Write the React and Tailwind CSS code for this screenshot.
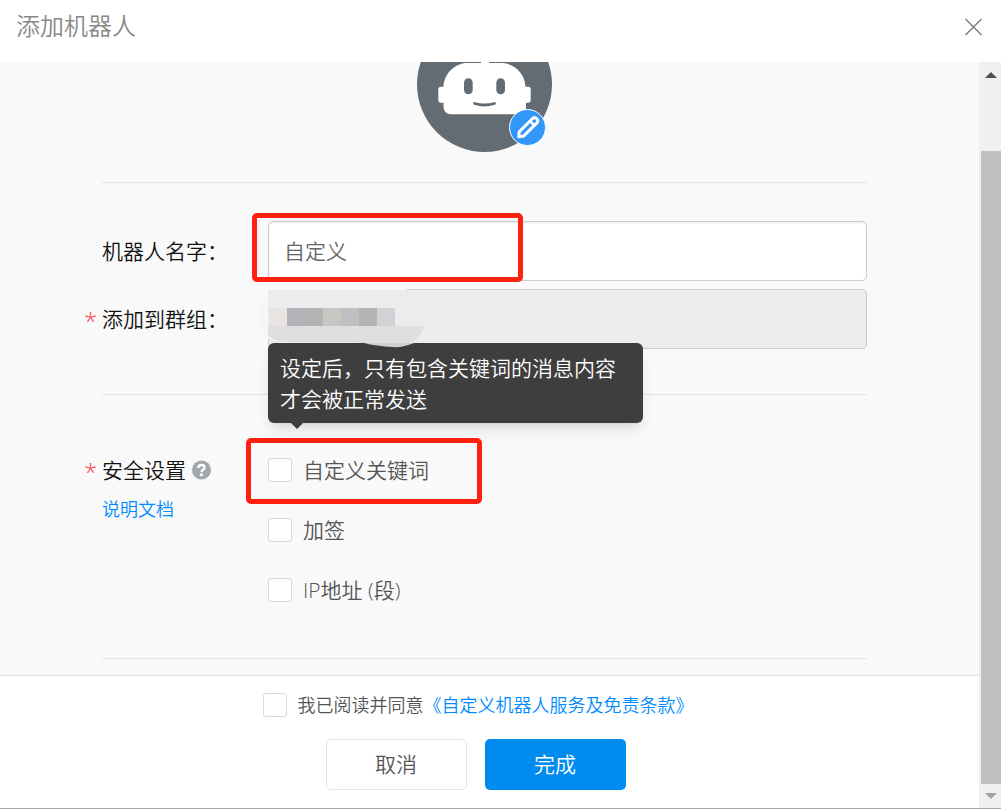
import { useState } from 'react'

const SAFETY_OPTIONS = [
    { id: 'keyword', label: '自定义关键词', tip: '设定后，只有包含关键词的消息内容才会被正常发送' },
    { id: 'sign', label: '加签' },
    { id: 'ip', label: 'IP地址 (段)' },
]

function RobotAvatar() {
    return (
        <svg width="135" height="135" viewBox="0 0 135 135" role="img" aria-label="机器人头像">
            <circle cx="67.5" cy="67.5" r="67.5" fill="#646c73" />
            <rect x="64" y="30" width="8" height="20" fill="#fff" />
            <path
                d="M49 46H86C98 47 108 57 108.500 69.700H111Q113.700 69.700 113.700 72.500V83Q113.700 85.700 111 85.700H109V91Q108.500 97.300 102 97.300H34Q27 97 26.500 90V85.700H24Q21.300 85.700 21.300 83V72.500Q21.300 69.700 24 69.700H26.500C27 57 37 47 49 46Z"
                fill="#fff"
            />
            <rect x="47" y="61.300" width="8.700" height="16" rx="4.350" fill="#646c73" />
            <rect x="79.300" y="61.300" width="8.700" height="16" rx="4.350" fill="#646c73" />
            <path d="M57.500 86.500Q67.500 89.500 77.500 86.500" fill="none" stroke="#646c73" strokeWidth="2.800" strokeLinecap="round" />
            <circle cx="110.500" cy="110.500" r="18" fill="#3296fa" stroke="#fff" strokeWidth="1" />
            <path
                d="M101.800 119.800L102.200 114.800L115.800 101.300Q117.800 99.700 119.800 101.700Q121.600 103.700 120.200 105.600L106.800 118.900Z"
                fill="none"
                stroke="#fff"
                strokeWidth="3"
                strokeLinejoin="round"
            />
            <path d="M112.800 103.800L117.600 108.600" stroke="#fff" strokeWidth="2.600" />
        </svg>
    )
}

function Checkbox({ id, checked, onChange }) {
    return (
        <input
            id={id}
            type="checkbox"
            checked={checked}
            onChange={onChange}
            className="size-6 shrink-0 appearance-none rounded-[3px] border border-[#d9d9d9] bg-white checked:border-[#008cee] checked:bg-[#008cee]"
        />
    )
}

function FieldRow({ label, htmlFor, required, children }) {
    return (
        <div className="flex items-center">
            <span className="w-[18px] pt-1 text-2xl leading-none text-[#ff3b4e]">{required && '*'}</span>
            <label htmlFor={htmlFor} className="w-[166px] shrink-0 text-[21px] leading-[30px] text-[#111]">{label}</label>
            <div className="relative flex-1">{children}</div>
        </div>
    )
}

function Highlight({ className }) {
    return <div className={`pointer-events-none absolute rounded-[5px] border-5 border-[#ff2010] ${className}`} />
}

// pixelated group name, smeared past the left edge of its field
function Mosaic() {
    const blocks = ['#e8e4e1', '#b3b4b9', '#b3b3b3', '#c8c6c2', '#bec0c3', '#b5b4b3', '#d0d2d5']
    return (
        <svg className="pointer-events-none absolute -top-2 -left-3 z-20" width="180" height="70" viewBox="0 0 180 70">
            <path d="M13 14Q3 20 2 34Q2 50 13 58Z" fill="#f6f6f6" />
            <path d="M12 8H150Q162 14 168 27V45H12Z" fill="#ececec" />
            <path d="M12 5H140L152 9H12Z" fill="#f7f7f7" />
            <path d="M12 45H169Q164 57 154 62H108L85 61H40Q22 62 12 55Z" fill="#dfdfdf" />
            <path d="M108 62H158Q146 67 137 66Q120 65 108 62Z" fill="#d0d0d0" />
            {blocks.map((color, i) => (
                <rect key={i} x={13 + i * 18} y="27" width="18" height="18" fill={color} />
            ))}
        </svg>
    )
}

function Tooltip({ children }) {
    return (
        <div role="tooltip" className="absolute bottom-full left-0 z-10 mb-[35px] w-[375px] rounded-md bg-[#383838]/97 px-3 pt-[10px] pb-2 text-[21px] leading-[31px] text-white shadow-lg">
            {children}
            <svg className="absolute top-full left-[23px]" width="12" height="6" viewBox="0 0 12 6">
                <path d="M0 0H12L6 6Z" fill="#3d3d3d" />
            </svg>
        </div>
    )
}

function Scrollbar() {
    return (
        <div className="flex w-[22px] shrink-0 flex-col bg-[#f0f0f0] pl-[2px]" aria-hidden="true">
            <div className="flex h-[89px] justify-center pt-[10px]">
                <svg width="12" height="6" viewBox="0 0 12 6"><path d="M0 6L6 0L12 6Z" fill="#505050" /></svg>
            </div>
            <div className="flex-1 bg-[#c0c0c0]" />
            <div className="flex h-6 justify-center pt-[9px]">
                <svg width="12" height="6" viewBox="0 0 12 6"><path d="M0 0H12L6 6Z" fill="#a3a3a3" /></svg>
            </div>
        </div>
    )
}

function App() {
    const [name, setName] = useState('自定义')
    const [safety, setSafety] = useState({})
    const [agreed, setAgreed] = useState(false)

    const toggleSafety = (id) => {
        setSafety(prev => ({ ...prev, [id]: !prev[id] }))
    }

    return (
        <div className="flex min-h-screen flex-col border-b border-[#a8a8a8] bg-white font-['Open_Sans','Noto_Sans_CJK_SC',sans-serif] font-[350]">
            <header className="flex h-[62px] items-start justify-between pt-2 pr-[18px] pl-4">
                <h1 className="text-2xl leading-9 font-[350] text-[#888]">添加机器人</h1>
                <button type="button" aria-label="关闭" className="mt-[10px]">
                    <svg width="19" height="18" viewBox="0 0 19 18">
                        <path d="M1.500 1L17.500 17M17.500 1L1.500 17" stroke="#777" strokeWidth="1.300" />
                    </svg>
                </button>
            </header>

            <div className="flex flex-1">
                <div className="flex flex-1 flex-col">
                    <main className="flex-1 overflow-hidden bg-[#f9f9f9] pr-28 pl-[84px]">
                        <div className="-mt-[45px] ml-[18px] flex justify-center border-b border-[#e3e3e3] pb-[30px]">
                            <RobotAvatar />
                        </div>

                        <div className="mt-[38px] flex flex-col gap-2">
                            <FieldRow label="机器人名字：" htmlFor="robot-name">
                                <input
                                    id="robot-name"
                                    value={name}
                                    onChange={e => setName(e.target.value)}
                                    className="block h-[60px] w-full rounded-[5px] border border-[#ccc] bg-white px-[15px] pb-[2px] text-[21px] text-[#666] shadow-[inset_0_1px_2px_rgba(0,0,0,0.08)]"
                                />
                                <Highlight className="-top-2 -left-4 h-[69px] w-[271px]" />
                            </FieldRow>
                            <FieldRow label="添加到群组：" htmlFor="robot-group" required>
                                <input
                                    id="robot-group"
                                    readOnly
                                    className="block h-[60px] w-full rounded-[5px] border border-[#ccc] bg-[#ededed] px-[15px] pb-[2px] text-[21px]"
                                />
                                <Mosaic />
                            </FieldRow>
                        </div>

                        <div className="mt-[45px] ml-[18px] border-t border-[#e3e3e3]" />

                        <div className="mt-[45px] flex">
                            <span className="w-[18px] pt-5 text-2xl leading-none text-[#ff3b4e]">*</span>
                            <div className="w-[166px] shrink-0 pt-[15px]">
                                <div className="flex items-center gap-[5px] text-[21px] leading-[30px] text-[#111]">
                                    安全设置
                                    <svg width="20" height="20" viewBox="0 0 20 20">
                                        <circle cx="10.500" cy="10" r="9.500" fill="#a2a7aa" />
                                        <path d="M7.300 8Q7.300 5 10.500 5Q13.500 5 13.500 7.600Q13.500 9 11.800 10Q10.500 10.800 10.500 12.200" fill="none" stroke="#fff" strokeWidth="2.300" />
                                        <circle cx="10.500" cy="14.800" r="1.500" fill="#fff" />
                                    </svg>
                                </div>
                                <a href="#doc" className="mt-[10px] block text-lg leading-7 text-[#008cff]">说明文档</a>
                            </div>
                            <div className="relative flex flex-col">
                                <Highlight className="-left-[22px] -top-[2px] h-[66px] w-[236px]" />
                                {SAFETY_OPTIONS.map(option => (
                                    <div key={option.id} className="relative flex h-[60px] items-center gap-[11px]">
                                        <Checkbox id={option.id} checked={!!safety[option.id]} onChange={() => toggleSafety(option.id)} />
                                        <label htmlFor={option.id} className="text-[21px] leading-[30px] text-[#555]">{option.label}</label>
                                        {option.tip && <div className="absolute top-[18px] left-0"><Tooltip>{option.tip}</Tooltip></div>}
                                    </div>
                                ))}
                            </div>
                        </div>

                        <div className="mt-[38px] ml-[18px] border-t border-[#e3e3e3]" />
                    </main>

                    <footer className="flex flex-col items-center border-t border-[#e0e0e0] pt-[17px] pr-7 pb-[18px]">
                        <div className="flex items-center gap-[11px] pl-[5px] text-lg leading-6 text-[#555]">
                            <Checkbox id="agree" checked={agreed} onChange={() => setAgreed(!agreed)} />
                            <div>
                                <label htmlFor="agree">我已阅读并同意</label>
                                <a href="#terms" className="text-[#008cff]">《自定义机器人服务及免责条款》</a>
                            </div>
                        </div>
                        <div className="mt-[22px] flex gap-[18px] text-[21px] leading-[30px]">
                            <button type="button" className="h-[51px] w-[141px] rounded-[5px] border border-[#e3e3e3] pb-[2px] text-[#555]">取消</button>
                            <button type="button" className="h-[51px] w-[141px] rounded-[5px] bg-[#008cee] pb-[2px] text-white">完成</button>
                        </div>
                    </footer>
                </div>
                <Scrollbar />
            </div>
        </div>
    )
}

export default App
